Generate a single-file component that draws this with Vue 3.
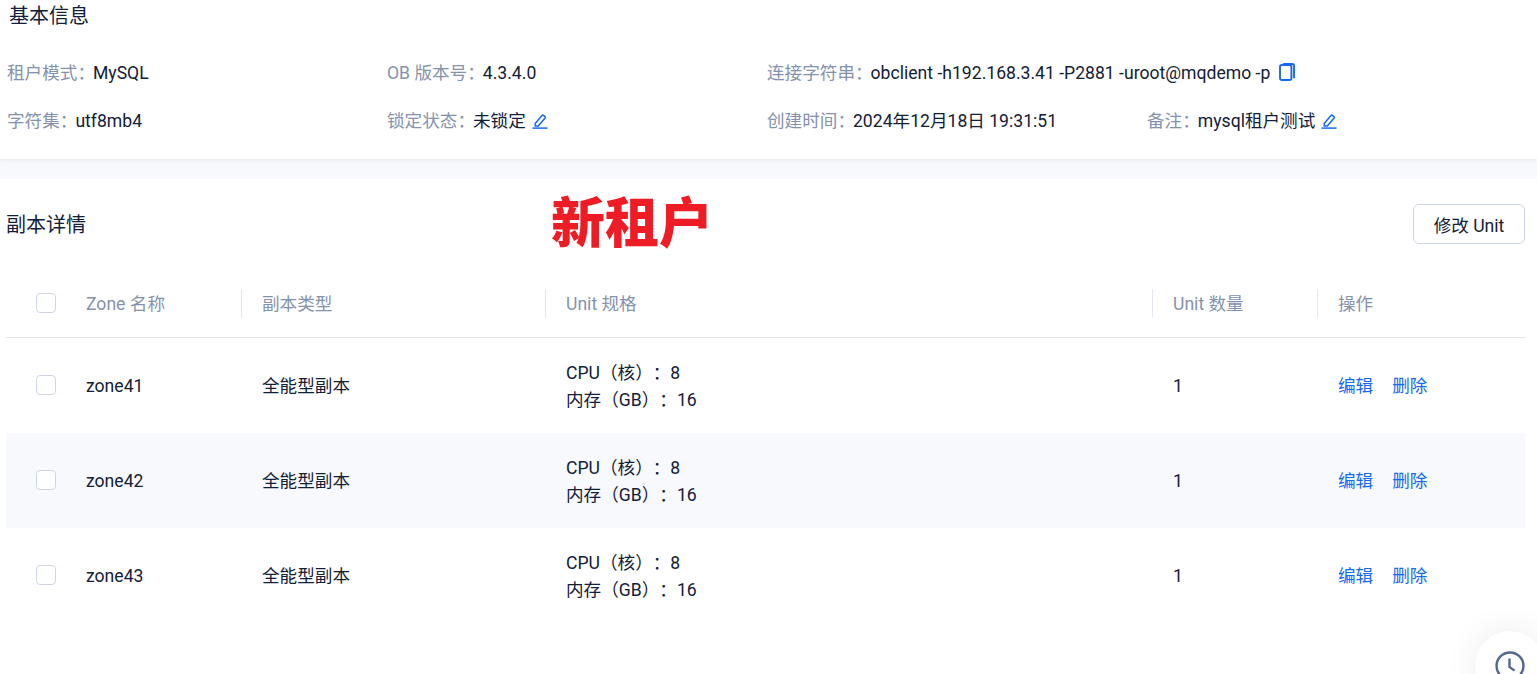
<script setup>
const colon = '\uFF1A'
const info = [
  { label: '租户模式' + colon, value: 'MySQL' },
  { label: 'OB 版本号' + colon, value: '4.3.4.0' },
  { label: '连接字符串' + colon, value: 'obclient -h192.168.3.41 -P2881 -uroot@mqdemo -p', icon: 'copy', wide: true },
  { label: '字符集' + colon, value: 'utf8mb4' },
  { label: '锁定状态' + colon, value: '未锁定', icon: 'edit' },
  { label: '创建时间' + colon, value: '2024年12月18日 19:31:51' },
  { label: '备注' + colon, value: 'mysql租户测试', icon: 'edit' }
]
const columns = ['Zone 名称', '副本类型', 'Unit 规格', 'Unit 数量', '操作']
const zones = ['zone41', 'zone42', 'zone43']
const cpu = 'CPU\uFF08核\uFF09' + colon + '8'
const mem = '内存\uFF08GB\uFF09' + colon + '16'
</script>

<template>
  <div class="page">
    <section class="info-card">
      <h2 class="info-title">基本信息</h2>
      <div class="info-grid">
        <div v-for="item in info" :key="item.label" class="info-item" :class="{ wide: item.wide }">
          <span class="info-label">{{ item.label }}</span>
          <span class="info-value">{{ item.value }}</span>
          <svg v-if="item.icon === 'edit'" class="icon" viewBox="0 0 16 16" fill="none" stroke="#1669f5" stroke-width="1.5">
            <path d="M3.2 10.4 10 2.4c.4-.4.9-.5 1.4-.1l1.6 1.3c.4.4.5.9.1 1.4l-6.8 8H3.2z" stroke-linejoin="round" />
            <path d="M.5 15.1h15" />
          </svg>
          <svg v-if="item.icon === 'copy'" class="icon copy" viewBox="0 0 16 18" fill="none" stroke="#1669f5" stroke-width="1.9">
            <path d="M4.2 1h9.2c.9 0 1.6.7 1.6 1.6v12.6" />
            <rect x="1" y="2" width="11.4" height="15" rx="1.8" />
          </svg>
        </div>
      </div>
    </section>
    <div class="band"></div>
    <section class="replica">
      <header class="replica-head">
        <h2 class="replica-title">副本详情</h2>
        <strong class="stamp">新租户</strong>
        <button class="btn">修改 Unit</button>
      </header>
      <div class="table">
        <div class="row head">
          <div class="cell check"><span class="box"></span></div>
          <div v-for="c in columns" :key="c" class="cell">{{ c }}</div>
        </div>
        <div v-for="z in zones" :key="z" class="row body">
          <div class="cell check"><span class="box"></span></div>
          <div class="cell latin">{{ z }}</div>
          <div class="cell cjk">全能型副本</div>
          <div class="cell spec">
            <div>{{ cpu }}</div>
            <div>{{ mem }}</div>
          </div>
          <div class="cell latin">1</div>
          <div class="cell cjk ops"><a>编辑</a><a>删除</a></div>
        </div>
      </div>
    </section>
    <div class="fab">
      <svg viewBox="0 0 30 30" fill="none" stroke="#56688f" stroke-width="2.4">
        <circle cx="15" cy="15" r="13.5" />
        <path d="M14.5 7.5v8.5l5 3.6" />
      </svg>
    </div>
  </div>
</template>

<style>
html, body { margin: 0; overflow: hidden; background: #fff; }
</style>

<style scoped>
.page {
  position: relative;
  height: 674px;
  overflow: hidden;
  font-family: Roboto, "Noto Sans CJK SC", sans-serif;
  font-size: 17.6px;
  color: #132039;
  text-spacing-trim: space-all;
}
.info-card {
  height: 159px;
  box-sizing: border-box;
  padding-left: 7px;
  box-shadow: 0 1px 4px rgba(54, 69, 99, 0.1);
  position: relative;
}
h2 { margin: 0; font-size: 20px; font-weight: 400; line-height: 28px; }
.info-title { padding: 2px 0 0 2px; height: 49px; box-sizing: border-box; }
.info-grid { display: grid; grid-template-columns: repeat(4, 380px); grid-auto-rows: 48px; }
.info-item { line-height: 48px; white-space: nowrap; }
.info-item.wide { grid-column: span 2; }
.info-item.wide + .info-item { grid-column: 1; }
.info-label { color: #8592ad; margin-right: -2px; }
.icon { width: 16px; height: 16px; margin-left: 6px; vertical-align: -2px; }
.icon.copy { height: 18px; margin-left: 9px; vertical-align: -2px; }
.band { height: 20px; background: #f8f9fd; }
.replica { padding: 0 12px 0 6px; }
.replica-head { display: flex; align-items: center; height: 90px; }
.replica-title { width: 546px; flex: none; padding-top: 2px; }
.stamp {
  font-family: "Noto Sans CJK SC", sans-serif;
  font-size: 54px;
  font-weight: 900;
  line-height: 60px;
  color: #ee1c25;
  margin: -8px 0 0 -1px;
}
.btn {
  margin-left: auto;
  width: 112px;
  height: 40px;
  background: #fff;
  border: 1px solid #cdd5e4;
  border-radius: 6px;
  font: inherit;
  color: #132039;
  padding: 0;
}
.row { display: grid; grid-template-columns: 60px 176px 304px 607px 165px 207px; }
.row.head { height: 69px; border-bottom: 1px solid #e2e4ee; box-sizing: border-box; color: #8592ad; }
.row.body { height: 95px; }
.row.body:nth-child(odd) { background: #f8f9fd; }
.cell { display: flex; align-items: center; padding: 0 0 1px 20px; position: relative; box-sizing: border-box; }
.cell.latin { padding-bottom: 0; }
.cell.cjk { padding-bottom: 2px; }
.head .cell:not(.check):not(:last-child)::after {
  content: "";
  position: absolute;
  right: 0;
  top: 20px;
  height: 28px;
  width: 1px;
  background: #e2e7f1;
}
.check { padding-left: 30px; padding-bottom: 1px; }
.box {
  width: 20px;
  height: 20px;
  box-sizing: border-box;
  border: 1px solid #cdd5e4;
  border-radius: 4px;
  background: #fff;
}
.spec { display: block; padding-top: 22px; padding-bottom: 0; line-height: 27px; }
.ops { gap: 19px; }
.ops a { color: #1669f5; }
.fab {
  position: absolute;
  left: 1475px;
  top: 631px;
  width: 70px;
  height: 70px;
  border-radius: 50%;
  background: #fff;
  box-shadow: 0 0 30px rgba(54, 69, 99, 0.1);
  display: flex;
  align-items: center;
  justify-content: center;
}
.fab svg { width: 30px; height: 30px; }
</style>
